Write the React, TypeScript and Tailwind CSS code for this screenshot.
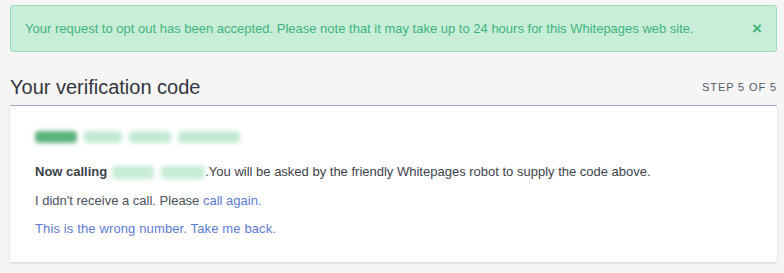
import React from 'react';

function Blob({ className }: { className: string }) {
  return <span className={`inline-block h-[12px] rounded-[4px] blur-[2px] ${className}`} />;
}

export default function App() {
  return (
    <div className="min-h-[273px] w-[784px] bg-[#f5f5f5] pl-[10px] pr-[7px] pt-[5px] font-['Liberation_Sans',Arial,sans-serif] text-[13px]">
      <div className="flex h-[47px] items-center justify-between rounded-[3px] border border-[#96dcb6] bg-[#c8eed9] pl-[14px] pr-[14px] text-[#3fb47a]">
        <span>
          Your request to opt out has been accepted. Please note that it may take up to 24 hours for this Whitepages web site.
        </span>
        <span className="text-[17px] font-bold leading-none">×</span>
      </div>

      <div className="mt-[24px] flex items-end justify-between border-b border-[#a3aac2] pb-[7px]">
        <h2 className="text-[20px] leading-[22px] text-[#333640]">Your verification code</h2>
        <span className="mb-[3px] text-[11px] tracking-[0.08em] text-[#555a66]">STEP 5 OF 5</span>
      </div>

      <div className="h-[156px] bg-white px-[25px] pt-[25px] leading-[18px] shadow-[0_1px_2px_rgba(0,0,0,0.15)]">
        <div className="flex items-center gap-[7px]">
          <Blob className="w-[42px] bg-[#5bb27c]" />
          <Blob className="w-[38px] bg-[#c4ead3]" />
          <Blob className="w-[42px] bg-[#c4ead3]" />
          <Blob className="w-[62px] bg-[#c4ead3]" />
        </div>

        <p className="mt-[20px] flex items-center text-[#3b3f4a]">
          <span className="font-bold">Now calling</span>
          <Blob className="ml-[5px] h-[13px] w-[42px] bg-[#c6ecd5]" />
          <Blob className="ml-[7px] h-[13px] w-[44px] bg-[#c6ecd5]" />
          <span>.You will be asked by the friendly Whitepages robot to supply the code above.</span>
        </p>

        <p className="mt-[11px] text-[#4a4f5c]">
          I didn't receive a call. Please <a className="text-[#5b7bd5]">call again.</a>
        </p>

        <p className="mt-[10px] tracking-[0.01em] text-[#5b7bd5]">This is the wrong number. Take me back.</p>
      </div>
    </div>
  );
}
